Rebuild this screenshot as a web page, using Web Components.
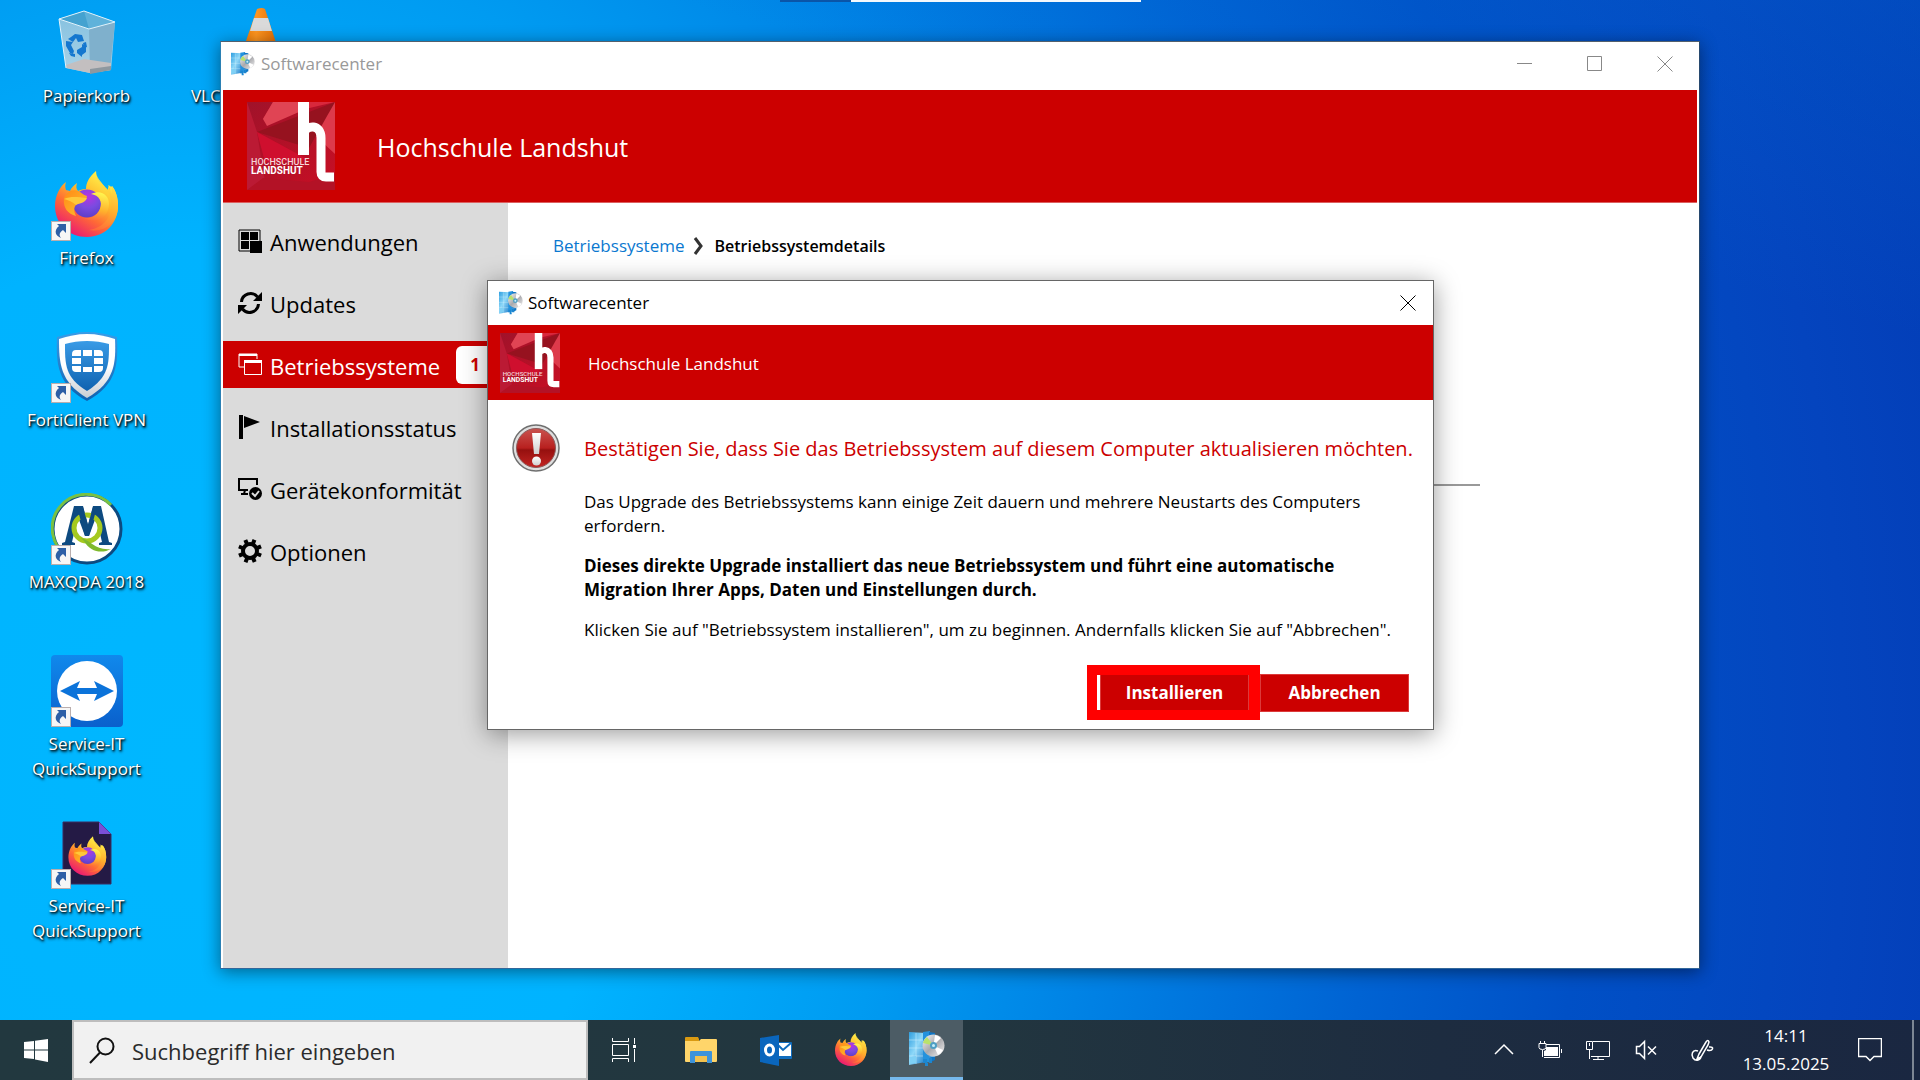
<!DOCTYPE html>
<html lang="de">
<head>
<meta charset="utf-8">
<title>Softwarecenter</title>
<style>
html, body { height: 100%; margin: 0; }
body { font-family: "Open Sans", "Noto Sans", sans-serif; font-size: 17px; line-height: 24px; color: #000; overflow: hidden; }
</style>
</head>
<body>
<desk-top>
  <desk-icon slot="icons" icon="bin">Papierkorb</desk-icon>
  <desk-icon slot="icons" icon="firefox" shortcut>Firefox</desk-icon>
  <desk-icon slot="icons" icon="forti" shortcut>FortiClient VPN</desk-icon>
  <desk-icon slot="icons" icon="maxqda" shortcut>MAXQDA 2018</desk-icon>
  <desk-icon slot="icons" icon="viewer" shortcut>Service-IT QuickSupport</desk-icon>
  <desk-icon slot="icons" icon="foxdoc" shortcut>Service-IT QuickSupport</desk-icon>
  <desk-icon slot="icons2" icon="vlc">VLC media player</desk-icon>

  <app-window slot="windows" title-text="Softwarecenter" brand="Hochschule Landshut">
    <nav-item slot="nav" icon="apps">Anwendungen</nav-item>
    <nav-item slot="nav" icon="refresh">Updates</nav-item>
    <nav-item slot="nav" icon="os" badge="1" selected>Betriebssysteme</nav-item>
    <nav-item slot="nav" icon="flag">Installationsstatus</nav-item>
    <nav-item slot="nav" icon="device">Gerätekonformität</nav-item>
    <nav-item slot="nav" icon="gear">Optionen</nav-item>
    <bread-crumb parent="Betriebssysteme">Betriebssystemdetails</bread-crumb>
  </app-window>

  <confirm-dialog slot="windows" title-text="Softwarecenter" brand="Hochschule Landshut">
    <span slot="heading">Bestätigen Sie, dass Sie das Betriebssystem auf diesem Computer aktualisieren möchten.</span>
    <span slot="info">Das Upgrade des Betriebssystems kann einige Zeit dauern und mehrere Neustarts des Computers erfordern.</span>
    <span slot="strong">Dieses direkte Upgrade installiert das neue Betriebssystem und führt eine automatische Migration Ihrer Apps, Daten und Einstellungen durch.</span>
    <span slot="hint">Klicken Sie auf "Betriebssystem installieren", um zu beginnen. Andernfalls klicken Sie auf "Abbrechen".</span>
    <red-button slot="actions" marked>Installieren</red-button>
    <red-button slot="actions">Abbrechen</red-button>
  </confirm-dialog>

  <task-bar slot="taskbar"></task-bar>
</desk-top>

<script>
const fox = `
  <defs>
    <linearGradient id="fa" x1=".8" y1=".1" x2=".25" y2="1"><stop offset="0" stop-color="#fff14a"/><stop offset=".35" stop-color="#ffb62a"/><stop offset=".62" stop-color="#ff6a35"/><stop offset="1" stop-color="#e8107a"/></linearGradient>
    <radialGradient id="fb" cx=".55" cy=".25" r=".8"><stop offset="0" stop-color="#b833e1"/><stop offset=".5" stop-color="#7a4be0"/><stop offset="1" stop-color="#5b3cc4"/></radialGradient>
    <linearGradient id="fc" x1="0" y1="0" x2="1" y2="1"><stop offset="0" stop-color="#ff8a16"/><stop offset="1" stop-color="#ffc02e"/></linearGradient>
    <linearGradient id="fd" x1=".5" y1="0" x2=".3" y2="1"><stop offset="0" stop-color="#fff44f"/><stop offset=".6" stop-color="#ffb02c"/><stop offset="1" stop-color="#ff6a3a"/></linearGradient>
  </defs>
  <path fill="url(#fa)" d="M45 2C38 8 35 14 35 20c-4 0-6 1-8 2-2-2-2-5-1-8-3 2-6 5-7 8l-4-1c-1-3-1-5 0-8C9 17 4 27 4 37c0 18 14 31 32 31s31-14 31-31c0-8-2-15-6-20l-1 1c-1-2-2-1-3-2 1 2 2 5 1 6C54 17 45 12 45 2z"/>
  <path fill="url(#fd)" d="M45 2c0 11 13 14 15 30 2 15-7 27-22 29 18 3 29-10 29-24 0-8-2-15-6-20v8l-4-8v7C53 17 45 12 45 2z"/>
  <circle cx="36" cy="34.500" r="14" fill="url(#fb)"/>
  <path fill="url(#fd)" d="M40 25c8 1 12 8 9 15-2 6-8 10-16 9 14 7 25-2 25-14 0-9-8-15-18-10z"/>
  <path fill="url(#fc)" d="M19 22c3-1 6-1 8 0 3 1 5 4 9 5 0 4-5 5-9 7-4 3-5 7-2 13-8-2-13-8-12-17 0-2 2-5 6-8z"/>
  <path fill="#ffc83a" d="M13 30c7-3 13-2 23-1-2 5-7 5-11 7-3-3-8-5-12-6z"/>`;
const server = `
  <defs><linearGradient id="sa" x1="0" y1="0" x2="1" y2="1"><stop offset="0" stop-color="#2f9fe0"/><stop offset=".45" stop-color="#8fd8f8"/><stop offset="1" stop-color="#1a78c8"/></linearGradient>
  <linearGradient id="sb" x1="0" y1="0" x2="1" y2="1"><stop offset="0" stop-color="#f8f8f8"/><stop offset=".5" stop-color="#a9a9ad"/><stop offset="1" stop-color="#f4f4f4"/></linearGradient></defs>
  <path fill="url(#sa)" d="M0 1l17 1v29L0 34z"/><path fill="#2492dd" d="M14 1l7-1v31l-7 1z"/><path fill="#0f75c4" d="M20 1l6 1v27l-6 3z"/>
  <path stroke="#d6f3ff" stroke-opacity=".5" stroke-width="1" fill="none" d="M0 9h14M0 17h14M0 25h14M7 2v31M20 8l6 1M20 26l6-1"/>
  <path fill="#7fd0f5" d="M1 26l6-1v7l-6 1z"/><path fill="#1d86d0" d="M14 28h4v4h1v3h-3v-3h-2zM20 27h3v5h-3z"/>
  <circle cx="24.500" cy="14.500" r="11" fill="url(#sb)"/><path d="M24.500 14.500L14 12A11 11 0 0 1 18 6z" fill="#b9e26b"/><path d="M24.500 14.500L34 19a11 11 0 0 1-5 5z" fill="#fff"/><path d="M24.500 14.500L26 4a11 11 0 0 1 6 3z" fill="#fff"/>
  <circle cx="24.500" cy="14.500" r="3.500" fill="#4f9fc4"/><circle cx="24.500" cy="14.500" r="1.500" fill="#c9eefa"/>`;
const ICONS = {
  bin: [72, `<defs><linearGradient id="g" x1="0" y1="0" x2="0" y2="1"><stop offset="0" stop-color="#8ec3de"/><stop offset="1" stop-color="#b5d5e6"/></linearGradient></defs>
    <path d="M8 12L33 4l31 11-4 48-21 3-24-5z" fill="url(#g)" opacity=".93"/><path d="M8 12L33 4l31 11-26 7z" fill="#44a2d0"/><path d="M33 4v14M33 4l31 11-26 7z" fill="#5fb2da"/>
    <path d="M38 22l26-7-5 48-20 3z" fill="#7fb0cc"/><path d="M15 58l18-6 27 4v7l-21 3-24-5z" fill="#c3bfc0"/><path d="M39 62l21-3v4l-21 4z" fill="#8e989f"/>
    <path d="M8 12L33 4l31 11-26 7zM8 12l7 49" fill="none" stroke="#dff2fb" stroke-width="1"/>
    <g fill="#1477cf"><path d="M20 30l4-3 7 1 2 6-6 1-2-4-3 4-5-3z"/><path d="M15 34l7 1-2 3 3 6-1 3-3-1-4-7z"/><path d="M26 43l5-3v-3l4 2 0 6-4 3v2l-5-4z"/><path d="M32 36l3-1 1 5-3 1zM18 46l6 1v3l-4-1z"/></g>`],
  firefox: [72, fox],
  forti: [72, `<defs><linearGradient id="g" x1="0" y1="0" x2="0" y2="1"><stop offset="0" stop-color="#3a9be6"/><stop offset="1" stop-color="#0f62b0"/></linearGradient><linearGradient id="h" x1="0" y1="0" x2="0" y2="1"><stop offset=".5" stop-color="#fff"/><stop offset="1" stop-color="#c9cdd3"/></linearGradient></defs>
    <path d="M36 1c10 0 20 2 30 5 1 26 1 47-30 64C6 54 5 32 6 6c10-3 20-5 30-5z" fill="url(#g)"/>
    <path d="M36 3c10 0 19 2 28 5 1 24 0 43-28 59C9 51 8 32 8 8c9-3 18-5 28-5z" fill="url(#h)"/>
    <path d="M36 10c8 0 15 1 22 3 0 20 0 33-22 47C14 47 14 33 14 13c7-2 14-3 22-3z" fill="url(#g)"/>
    <g fill="#fff"><path d="M25 19h5v6h-9v-2q0-4 4-4zM32 19h9v6h-9zM43 19h5q4 0 4 4v2h-9zM21 27h9v6h-9zM43 27h9v6h-9zM21 35h9v6h-5q-4 0-4-4zM32 36h9v5h-9zM43 35h9v2q0 4-4 4h-5z"/></g>`],
  maxqda: [72, `<circle cx="36" cy="36" r="34" fill="#fff"/><circle cx="36" cy="36" r="34" fill="none" stroke="#0d4a80" stroke-width="3"/><path d="M60 12A34 34 0 1 0 17 64" fill="none" stroke="#79c143" stroke-width="3"/>
    <path d="M23 13h9l5 19 5-19h8l8 36 3 1v2H48v-2l3-1-6-25-7 19h-4l-7-19-6 25 3 1v2H11v-2l3-1z" fill="#0d4a80"/>
    <circle cx="36" cy="35" r="13" fill="none" stroke="#a5c91f" stroke-width="5"/><path d="M30 45c9 2 15 13 30 11-9 5-21 3-27-8z" fill="#7fb92c"/>
    <path d="M26 14h6l5 18 5-18h4l-8 29h-4z" fill="#0d4a80"/>`],
  viewer: [72, `<defs><linearGradient id="g" x1="0" y1="0" x2="0" y2="1"><stop offset="0" stop-color="#1089ec"/><stop offset="1" stop-color="#0a60cc"/></linearGradient></defs><rect width="72" height="72" rx="4" fill="url(#g)"/><circle cx="36" cy="36" r="30" fill="#fff"/><path d="M9 36l20-10-3 7h20l-3-7 20 10-20 10 3-7H26l3 7z" fill="#0b73da"/>`],
  foxdoc: [72, `<path d="M12 5h36l12 12v50H12z" fill="#241a45" stroke="#3b2d63" stroke-width="1"/><path d="M48 5l12 12H48z" fill="#7a4fd6"/><g transform="translate(15 18) scale(.6)">${fox}</g>`],
  vlc: [72, `<defs><linearGradient id="g" x1="0" y1="0" x2="1" y2="0"><stop offset="0" stop-color="#e87400"/><stop offset=".4" stop-color="#ff9620"/><stop offset="1" stop-color="#d96400"/></linearGradient></defs><path d="M33 2q5-2 8 0l17 52H15z" fill="url(#g)"/><path d="M30 11h14l4 13H26z" fill="#dadada"/><path d="M20 38h34l4 12H15z" fill="#e4e4e4"/><path d="M8 52h57l5 18H3z" fill="#f08000"/>`],
  server: [36, server],
  apps: [24, `<path d="M1 1h21v21H1z" fill="none" stroke="#000" stroke-width="1"/><path d="M3 3h8v8H3zM12 3h8v8h-8zM3 12h8v8H3zM12 12h12v12H12z" fill="#000"/>`],
  refresh: [24, `<g fill="none" stroke="#000" stroke-width="3"><path d="M3.500 11a9 9 0 0 1 16-5"/><path d="M20.500 13a9 9 0 0 1-16 5"/></g><path d="M24 1v9h-9zM0 23v-9h9z" fill="#000"/>`],
  os: [24, `<g fill="none" stroke="#fff" stroke-width="1"><path d="M6 14H1V1h18v5"/><path d="M6.500 7.500h17v14h-17z"/></g><path d="M1 1h18v2H1zM6 7h18v3H6z" fill="#fff"/>`],
  flag: [24, `<path d="M1 0h4v24H1zM6 1l16 6-16 6z" fill="#000"/>`],
  device: [24, `<path d="M10 13H1V2h18v6M7 13l-1 4H3h7" fill="none" stroke="#000" stroke-width="2"/><circle cx="17.500" cy="16.500" r="6.500" fill="#000"/><path d="M14 16l3 3 4-5" stroke="#ddd" stroke-width="2" fill="none"/>`],
  gear: [24, `<circle cx="12" cy="12" r="7" fill="none" stroke="#000" stroke-width="4"/><g stroke="#000" stroke-width="4"><path d="M12 0v4M12 20v4M0 12h4M20 12h4" transform="rotate(22 12 12)"/><path d="M12 0v4M12 20v4M0 12h4M20 12h4" transform="rotate(67 12 12)"/></g>`],
  chevron: [20, `<path d="M6 2l6 8-6 8" fill="none" stroke="#333" stroke-width="3"/>`],
  min: [16, `<path d="M0 7.500h15" stroke="currentColor" fill="none"/>`],
  max: [16, `<path d="M.5 .5h14v14H.5z" stroke="currentColor" fill="none"/>`],
  close: [16, `<path d="M.5 .5l15 15M15.500 .5l-15 15" stroke="currentColor" fill="none"/>`],
  alert: [48, `<defs><linearGradient id="g" x1="0" y1="0" x2="0" y2="1"><stop offset="0" stop-color="#c9534f"/><stop offset=".5" stop-color="#b8201f"/><stop offset=".55" stop-color="#96100f"/><stop offset="1" stop-color="#c22422"/></linearGradient><linearGradient id="h" x1="0" y1="0" x2="0" y2="1"><stop offset="0" stop-color="#fff"/><stop offset="1" stop-color="#cfcfcf"/></linearGradient></defs>
    <circle cx="24" cy="24" r="23" fill="#dedede" stroke="#6f6f6f" stroke-width="1.500"/><circle cx="24" cy="24" r="19.500" fill="url(#g)" stroke="#8c5a5a" stroke-width="1"/>
    <path d="M20 9h9l-2 21h-5z" fill="url(#h)"/><circle cx="24.500" cy="37" r="4.500" fill="url(#h)"/>`],
  win: [24, `<path d="M0 4l10-1v8.500H0zM11 2.800L24 1v10.500H11zM0 12.500h10V21L0 20zM11 12.500h13V24L11 21.500z" fill="#fff"/>`],
  search: [28, `<circle cx="17.500" cy="10.500" r="8" fill="none" stroke="#111" stroke-width="2"/><path d="M12 16.500L2 27" stroke="#111" stroke-width="2"/>`],
  taskview: [24, `<g fill="none" stroke="#fff" stroke-width="1"><path d="M.5 0v3.500h16V0M.5 24v-3.500h16V24M.5 6.500h16v11H.5zM22.500 0v6M22.500 11v13"/></g><path d="M21 7h3v3h-3z" fill="#fff"/>`],
  folder: [32, `<path d="M0 4q0-1 1-1h12l1 2v3H0z" fill="#d99a12"/><path d="M0 7h14l2-2h15q1 0 1 1v21q0 1-1 1H1q-1 0-1-1z" fill="#ffd56a"/><path d="M5 18q0-1 1-1h20q1 0 1 1v11h-5v-7h-12v7H5z" fill="#3d93da"/><path d="M10 22h12v6H10z" fill="#f2c14e"/>`],
  outlook: [32, `<path d="M16 8h15q1 0 1 1v15q0 1-1 1H16z" fill="#0f6cbd"/><path d="M18 9h13v13H18z" fill="#fff"/><path d="M18 11l5 5 8-7" fill="none" stroke="#0f6cbd" stroke-width="2"/><path d="M0 4l19-3v31L0 28z" fill="#0a66bd"/><ellipse cx="9.500" cy="16" rx="4" ry="5" fill="none" stroke="#fff" stroke-width="3"/>`],
  up: [20, `<path d="M1 14l9-9 9 9" fill="none" stroke="#fff" stroke-width="1.500"/>`],
  battery: [24, `<path d="M5.500 6.500h16v13H6M23.500 11v4" fill="none" stroke="#fff"/><path d="M8 9h12v9H6v-5l2-1z" fill="#fff"/><path d="M1 5.500h7v4q0 2-3.500 2T1 9.500zM2.500 3v3M6.500 3v3M4.500 12v7" fill="#1c2a42" stroke="#fff"/>`],
  monitor: [24, `<path d="M7 3.500h16.500v15H5M12 19v3M7 21.500h11M3.500 12v9" fill="none" stroke="#fff"/><path d="M.5 3.500h6v8h-6zM3.500 5v3" fill="#1c2a42" stroke="#fff"/>`],
  volume: [24, `<path d="M2.500 8.500h3l5-5v17l-5-5h-3zM14 8.500l8 8M22 8.500l-8 8" fill="none" stroke="#fff" stroke-width="1.500"/>`],
  pen: [24, `<path d="M9 16l7-12q2-3 3 0l-1 3-7 12-4 2zM8 13C2 11 1 17 3 20c3 4 8 2 8-2M19 9c6-1 4 5-2 3" fill="none" stroke="#fff" stroke-width="1.500"/>`],
  note: [24, `<path d="M.5 .5h23v18h-7.500l-4 4-4-4H.5z" fill="none" stroke="#fff" stroke-width="1.500"/>`],
  arrow: [20, `<rect x=".5" y=".5" width="19" height="19" fill="#f6f6f6" stroke="#b9aeae"/><path d="M6 3h9v9l-3-3c-4 3-4 5-2 8-5-2-8-7-2-12z" fill="#2d5fa6"/>`],
  logo: [88, `<defs><linearGradient id="g" x1="0" y1="0" x2="1" y2="1"><stop offset="0" stop-color="#a0122a"/><stop offset="1" stop-color="#c80f24"/></linearGradient></defs>
    <rect width="88" height="88" fill="url(#g)"/><path d="M26 0h62L16 17z" fill="#d9283c"/><path d="M26 0h26v10L20 24l-4-7z" fill="#e04454"/><path d="M88 0v52L58 24z" fill="#dd3a4b"/><path d="M88 0L10 30l52 16z" fill="#96121f"/><path d="M10 30l52 28-44-8z" fill="#b80c26"/><path d="M0 0l10 30 8 50L0 88z" fill="#bb1a34"/><path d="M10 30l8 30 44-2z" fill="#cf0f2e"/><path d="M0 88l16-12 46 4 26-8v16z" fill="#b31226"/>
    <path d="M56.500 0v53" stroke="#fff" stroke-width="11" fill="none"/><path d="M56 32c4-10 18-10 18 4v34q0 5 5 5h8" stroke="#fff" stroke-width="9" fill="none"/>
    <text x="4" y="63" font-size="9" fill="#f6d5d9" font-family="Roboto" font-weight="500">HOCHSCHULE</text><text x="4" y="72" font-size="10" fill="#fff" font-family="Roboto" font-weight="700">LANDSHUT</text>`]
};

function define(name, css, html) {
  customElements.define(name, class extends HTMLElement {
    connectedCallback() {
      if (this.shadowRoot) return;
      const root = this.attachShadow({ mode: 'open' });
      root.innerHTML = `<style>*{box-sizing:border-box}${css}</style>${typeof html === 'function' ? html(this) : html}`;
    }
  });
}

define('x-icon', `:host{display:block;flex:none;width:var(--size,24px);height:var(--size,24px)}svg{display:block;width:100%;height:100%}`,
  el => { const [n, body] = ICONS[el.getAttribute('name')]; return `<svg viewBox="0 0 ${n} ${n}" aria-hidden="true">${body}</svg>`; });

define('desk-top', `
  :host{display:grid;grid-template-rows:1fr 60px;height:100vh}
  main{position:relative;overflow:hidden;display:flex;padding-top:7px;
    background:
      linear-gradient(195deg, rgba(0,110,215,.3) 0, rgba(0,110,215,0) 22%),
      radial-gradient(ellipse 1300px 1500px at 180px 760px, #00b7ff 0, #00b3ff 34%, #009bf1 55%, #0081e4 72%, #0063d3 92%, #0050c6 108%, #0444be 128%, #0238b1 150%)}
  .col{display:flex;flex-direction:column;gap:65px;width:173px}
  .tab{position:absolute;top:0;left:780px;width:361px;height:2px;background:linear-gradient(90deg,#0a55a8 71px,#f4f8fc 71px)}`,
  `<main><div class="tab"></div><div class="col"><slot name="icons"></slot></div><div class="col"><slot name="icons2"></slot></div><slot name="windows"></slot></main><slot name="taskbar"></slot>`);

define('desk-icon', `
  :host{display:flex;flex-direction:column;align-items:center;height:97px;color:#fff;line-height:25px;text-align:center;font-size:17px;text-shadow:1px 1px 2px #000,1px 2px 3px rgba(0,0,0,.8)}
  .pic{position:relative;--size:72px}
  .arrow{position:absolute;left:0;bottom:0;--size:20px}
  .label{width:144px;padding-top:4px}`,
  el => `<div class="pic"><x-icon name="${el.getAttribute('icon')}"></x-icon>${el.hasAttribute('shortcut') ? '<x-icon class="arrow" name="arrow"></x-icon>' : ''}</div><div class="label"><slot></slot></div>`);

define('app-window', `
  :host{position:absolute;inset:41px 220px 51px;display:flex;flex-direction:column;background:#fff;border:1px solid #4a6f8f;border-color:#53606d #27496f #33679a #2a80b4;padding:0 2px;box-shadow:0 3px 16px rgba(0,0,0,.45)}
  .title{display:flex;align-items:center;height:48px;color:#999;padding:0 24px 4px 8px}
  .title h1{flex:1;font:inherit;margin:0 0 0 6px}
  .ctl{display:flex;gap:54px;--size:16px}
  button{border:0;background:none;padding:0;color:#888}
  header{display:flex;align-items:center;gap:42px;height:113px;padding:0 24px;background:#c00;border-bottom:1px solid #dc6060;color:#fff;font-size:25px;line-height:36px}
  header x-icon{--size:88px}
  header span{padding-top:2px}
  .body{flex:1;display:flex;min-height:0}
  nav{width:285px;background:#dbdbdb;padding-top:14px;display:flex;flex-direction:column;gap:15px}
  section{flex:1;padding:31px 217px 0 45px}
  hr{margin:226px 0 0;border:0;height:2px;background:#999}`,
  el => `<div class="title"><x-icon name="server"></x-icon><h1>${el.getAttribute('title-text')}</h1>
    <div class="ctl"><button aria-label="Minimieren"><x-icon name="min"></x-icon></button><button aria-label="Maximieren"><x-icon name="max"></x-icon></button><button aria-label="Schließen"><x-icon name="close"></x-icon></button></div></div>
    <header><x-icon name="logo"></x-icon><span>${el.getAttribute('brand')}</span></header>
    <div class="body"><nav><slot name="nav"></slot></nav><section><slot></slot><hr></section></div>`);

define('nav-item', `
  :host{display:block}
  a{display:flex;align-items:center;gap:8px;height:47px;padding:0 14px 0 15px;color:#000;text-decoration:none;font-size:22px;line-height:32px;white-space:nowrap}
  :host([selected]) a{background:#c00;color:#fff}
  .text{flex:1;padding-top:3px}
  .badge{width:38px;height:38px;border-radius:6px;background:#fff;color:#c00;font-size:17px;font-weight:700;line-height:38px;text-align:center}`,
  el => `<a href="#"><x-icon name="${el.getAttribute('icon')}"></x-icon><span class="text"><slot></slot></span>${el.hasAttribute('badge') ? `<span class="badge">${el.getAttribute('badge')}</span>` : ''}</a>`);

define('bread-crumb', `
  :host{display:flex;align-items:center;gap:5px;font-size:17px;line-height:24px}
  a{color:#0a78d0;text-decoration:none}strong{font-size:16px;font-weight:600}x-icon{--size:20px}`,
  el => `<a href="#">${el.getAttribute('parent')}</a><x-icon name="chevron"></x-icon><strong><slot></slot></strong>`);

define('confirm-dialog', `
  :host{position:absolute;top:280px;left:487px;right:486px;background:#fff;border:1px solid #666;box-shadow:0 4px 24px rgba(0,0,0,.4)}
  .title{display:flex;align-items:center;height:44px;padding:0 17px 0 11px}
  .title h2{flex:1;font:inherit;margin:0 0 0 5px}
  button{border:0;background:none;padding:0;color:#000;--size:16px}
  header{display:flex;align-items:center;gap:28px;height:75px;padding:0 12px;background:#c00;color:#fff}
  header x-icon{--size:60px}
  header span{padding-top:2px}
  .body{display:flex;gap:24px;padding:24px 24px 0}
  .body>x-icon{--size:48px}
  .text{flex:1;min-width:0;display:flex;flex-direction:column;gap:16px}
  h3{margin:0 0 10px;padding-top:10px;font-size:20px;line-height:30px;font-weight:400;color:#c00;white-space:nowrap}
  p{margin:0}.b{font-weight:700}
  .actions{display:flex;justify-content:flex-end;gap:11px;padding:32px 24px 17px}`,
  el => `<div class="title"><x-icon name="server"></x-icon><h2>${el.getAttribute('title-text')}</h2><button aria-label="Schließen"><x-icon name="close"></x-icon></button></div>
    <header><x-icon name="logo"></x-icon><span>${el.getAttribute('brand')}</span></header>
    <div class="body"><x-icon name="alert"></x-icon><div class="text"><h3><slot name="heading"></slot></h3><p><slot name="info"></slot></p><p class="b"><slot name="strong"></slot></p><p><slot name="hint"></slot></p></div></div>
    <div class="actions"><slot name="actions"></slot></div>`);

define('red-button', `
  :host{display:block;position:relative}
  button{display:block;width:149px;height:38px;padding:0;background:#c00;border:1px solid #dc3a3a;color:#fff;font:700 17px/24px "Open Sans","Noto Sans",sans-serif}
  :host([marked])::after{content:"";position:absolute;inset:-9px -11px -8px -13px;border:10px solid #f00;border-right-width:11px}`,
  `<button><slot></slot></button>`);

define('task-bar', `
  :host{display:flex;height:60px;background:linear-gradient(90deg,#22383f,#22363f 50%,#1d2c40 75%,#1a2741);color:#fff}
  button{border:0;background:none;padding:0;color:inherit;display:flex;align-items:center;justify-content:center;font:inherit}
  .start{width:72px}
  label{display:flex;align-items:center;gap:16px;width:516px;padding-left:14px;background:#f1f1f1;border:2px solid #bdbdbd;--size:28px}
  input{flex:1;min-width:0;border:0;padding:2px 0 0;background:none;font:22px/30px "Open Sans","Noto Sans",sans-serif;color:#222;outline:0}
  input::placeholder{color:#2b2b2b;opacity:1}
  .apps{display:flex;flex:1}
  .apps button{width:75px}
  .apps .task{width:71px;margin-right:4px}
  .big{--size:32px}.fox{--size:36px}
  .apps .on{width:73px;margin-left:2px;background:#4c5c65;border-bottom:3px solid #76b9ed;--size:36px}
  .tray{display:flex;align-items:center;gap:24px;padding-right:26px}
  .tray .up{width:20px;--size:20px}
  .tray .pen{width:36px;padding-left:4px}
  .tray .note{width:32px}
  .clock{display:flex;flex-direction:column;align-items:center;line-height:28px;width:88px}
  .end{width:8px;border-left:2px solid #7d8794}`,
  `<button class="start" aria-label="Start"><x-icon name="win"></x-icon></button>
   <label><x-icon name="search"></x-icon><input type="text" aria-label="Suche" placeholder="Suchbegriff hier eingeben"></label>
   <div class="apps"><button class="task" aria-label="Taskansicht"><x-icon name="taskview"></x-icon></button><button class="big" aria-label="Explorer"><x-icon name="folder"></x-icon></button><button class="big" aria-label="Outlook"><x-icon name="outlook"></x-icon></button><button class="fox" aria-label="Firefox"><x-icon name="firefox"></x-icon></button><button class="on" aria-label="Softwarecenter"><x-icon name="server"></x-icon></button></div>
   <div class="tray"><button class="up" aria-label="Weitere Symbole"><x-icon name="up"></x-icon></button><button aria-label="Akku"><x-icon name="battery"></x-icon></button><button aria-label="Netzwerk"><x-icon name="monitor"></x-icon></button><button aria-label="Ton"><x-icon name="volume"></x-icon></button><button class="pen" aria-label="Stift"><x-icon name="pen"></x-icon></button><div class="clock"><span>14:11</span><span>13.05.2025</span></div><button class="note" aria-label="Mitteilungen"><x-icon name="note"></x-icon></button></div><button class="end" aria-label="Desktop anzeigen"></button>`);
</script>
</body>
</html>
